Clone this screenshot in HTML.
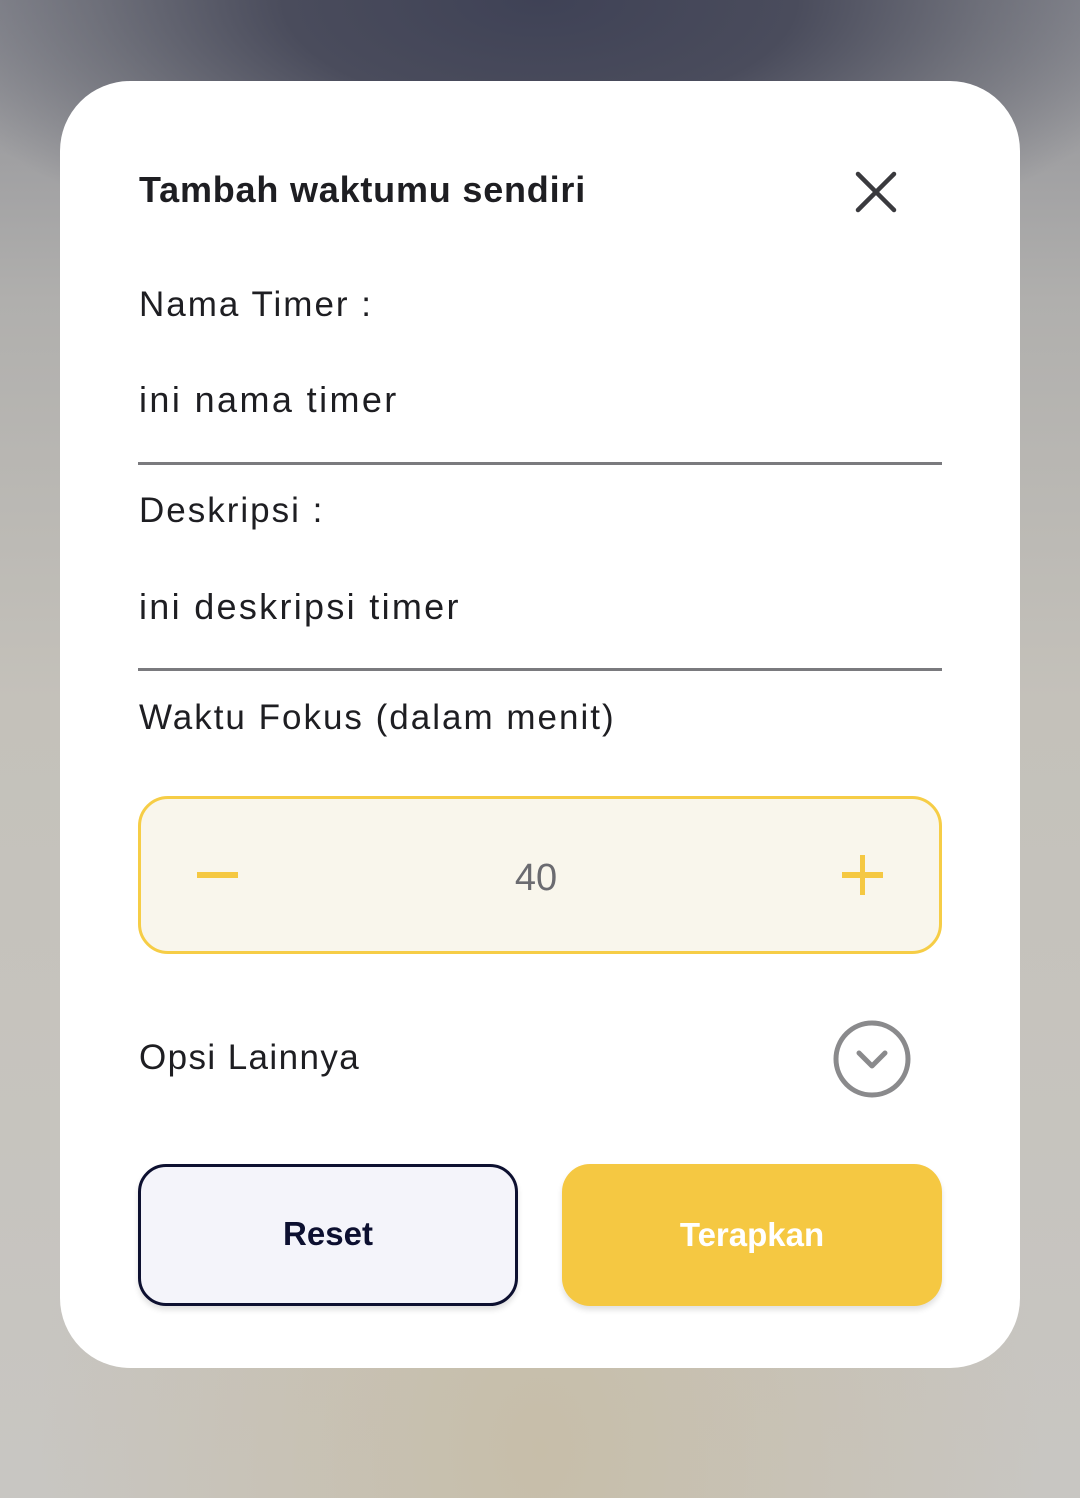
<!DOCTYPE html>
<html><head><meta charset="utf-8"><style>
*{margin:0;padding:0;box-sizing:border-box}
html,body{width:1080px;height:1498px;overflow:hidden}
body{position:relative;font-family:"Liberation Sans",sans-serif;
background:
radial-gradient(ellipse 640px 280px at 540px 0px,#3f4256 0%,#4a4c5c 40%,rgba(90,92,104,0.6) 70%,rgba(120,120,128,0) 100%),
radial-gradient(ellipse 500px 700px at 540px 1450px,#c7bea9 0%,rgba(200,195,180,0) 100%),
linear-gradient(#8e8f96 0px,#b0afad 300px,#c4c1ba 700px,#c8c6c2 1498px);}
.card{position:absolute;left:60px;top:81px;width:960px;height:1287px;background:#fff;border-radius:70px}
.t{position:absolute;left:139px;color:#1e1e22;white-space:nowrap}
.line{position:absolute;left:138px;width:804px;height:3px;background:#7a7a7e}
.l{font-size:35px;letter-spacing:2px}
.v{font-size:36px;letter-spacing:2.4px}
</style></head><body>
<div class="card"></div>
<div class="t" style="top:169px;font-size:36px;font-weight:bold;letter-spacing:0.8px">Tambah waktumu sendiri</div>
<svg style="position:absolute;left:855px;top:171px" width="42" height="42" viewBox="0 0 42 42"><path d="M3 3L39 39M39 3L3 39" stroke="#3a3a3e" stroke-width="4.5" stroke-linecap="round"/></svg>
<div class="t l" style="top:285px">Nama Timer :</div>
<div class="t v" style="top:379px">ini nama timer</div>
<div class="line" style="top:462px"></div>
<div class="t l" style="top:491px">Deskripsi :</div>
<div class="t v" style="top:586px;letter-spacing:2.3px">ini deskripsi timer</div>
<div class="line" style="top:668px"></div>
<div class="t l" style="top:698px">Waktu Fokus (dalam menit)</div>
<div style="position:absolute;left:138px;top:796px;width:804px;height:158px;border:3px solid #f6cd46;background:#f9f6ec;border-radius:30px"></div>
<div style="position:absolute;left:197px;top:872px;width:41px;height:6px;background:#f5c842"></div>
<div style="position:absolute;left:842px;top:872px;width:41px;height:6px;background:#f5c842"></div>
<div style="position:absolute;left:860px;top:855px;width:5px;height:40px;background:#f5c842"></div>
<div style="position:absolute;left:436px;top:857px;width:200px;text-align:center;font-size:38px;color:#6b6b70">40</div>
<div class="t l" style="top:1038px;letter-spacing:1.4px">Opsi Lainnya</div>
<svg style="position:absolute;left:832px;top:1019px" width="80" height="80" viewBox="0 0 80 80"><circle cx="40" cy="40" r="36" fill="none" stroke="#8a8a8c" stroke-width="5"/><path d="M27 34L40 47L53 34" fill="none" stroke="#8a8a8c" stroke-width="5" stroke-linecap="round" stroke-linejoin="round"/></svg>
<div style="position:absolute;left:138px;top:1164px;width:380px;height:142px;border:3px solid #0d1030;background:#f4f4fa;border-radius:28px;box-shadow:0 4px 6px rgba(0,0,0,0.12);text-align:center;line-height:134px;font-size:33px;font-weight:bold;color:#0d1030">Reset</div>
<div style="position:absolute;left:562px;top:1164px;width:380px;height:142px;background:#f5c842;border-radius:28px;box-shadow:0 4px 6px rgba(0,0,0,0.12);text-align:center;line-height:142px;font-size:33px;font-weight:bold;color:#fff">Terapkan</div>
</body></html>
